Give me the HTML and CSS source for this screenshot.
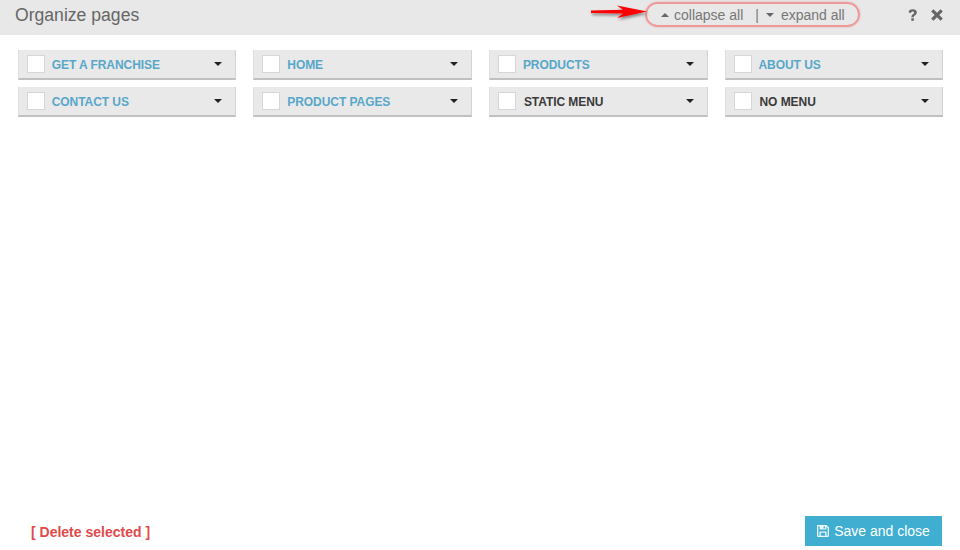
FILE: index.html
```html
<!DOCTYPE html>
<html lang="en">
<head>
<meta charset="utf-8">
<title>Organize pages</title>
<link rel="stylesheet" href="styles.css">
</head>
<body>
<div class="dialog">
  <header class="head">
    <h1 class="title">Organize pages</h1>
    <div class="toggles">
      <svg class="arrow" width="60" height="20" viewBox="0 0 60 20">
        <defs><filter id="s" x="-20%" y="-50%" width="140%" height="220%"><feDropShadow dx="1" dy="2" stdDeviation="1.5" flood-color="#000" flood-opacity=".45"/></filter></defs>
        <path d="M1 5.600 L33 4.800 L27 0.500 L57 6.500 L27 13 L33 8.500 L1 8 Z" fill="#f00" filter="url(#s)"/>
      </svg>
      <span class="toggle"><i class="tri up"></i>collapse all</span>
      <span class="sep">|</span>
      <span class="toggle"><i class="tri down"></i>expand all</span>
    </div>
    <div class="tools">
      <svg width="12" height="14" viewBox="0 0 12 14"><path d="M1.600 4.600C1.700 2.400 3.200 1.300 5.600 1.300c2.500 0 4.200 1.200 4.200 3.200 0 1.500-.9 2.200-1.900 2.900-.9.600-1.200.9-1.200 1.800H4.400c0-1.600.5-2.300 1.500-3 .8-.5 1.200-.8 1.200-1.500 0-.7-.6-1.100-1.500-1.100-1 0-1.500.5-1.600 1.500ZM4.300 10.300h2.600v2.500H4.300Z" fill="#666"/></svg>
      <svg width="14" height="14" viewBox="0 0 14 14"><path d="M2.300 2.300 11.700 11.700M11.700 2.300 2.300 11.700" stroke="#666" stroke-width="3.200"/></svg>
    </div>
  </header>
  <main class="grid">
    <div class="card"><span class="check"></span><span class="label link">GET A FRANCHISE</span><i class="caret"></i></div>
    <div class="card"><span class="check"></span><span class="label link">HOME</span><i class="caret"></i></div>
    <div class="card"><span class="check"></span><span class="label link">PRODUCTS</span><i class="caret"></i></div>
    <div class="card"><span class="check"></span><span class="label link">ABOUT US</span><i class="caret"></i></div>
    <div class="card"><span class="check"></span><span class="label link">CONTACT US</span><i class="caret"></i></div>
    <div class="card"><span class="check"></span><span class="label link">PRODUCT PAGES</span><i class="caret"></i></div>
    <div class="card"><span class="check"></span><span class="label">STATIC MENU</span><i class="caret"></i></div>
    <div class="card"><span class="check"></span><span class="label">NO MENU</span><i class="caret"></i></div>
  </main>
  <footer class="foot">
    <span class="delete">[ Delete selected ]</span>
    <button class="save" type="button">
      <svg width="14" height="14" viewBox="0 0 14 14"><path fill-rule="evenodd" d="M1.500 1H10.500L13 3.500V11.500A1.500 1.500 0 0 1 11.500 13H2.500A1.500 1.500 0 0 1 1 11.500V1.500ZM2.300 2.300V11.700H3.500V7.500H10.500V11.700H11.700V4L10.300 2.700V5.500H3.700V2.300ZM4.800 8.800V11.700H9.200V8.800ZM7.500 2.500V4.400H9V2.500Z" fill="#fff" fill-opacity=".9"/></svg>
      Save and close
    </button>
  </footer>
</div>
</body>
</html>
```

FILE: styles.css
```css
* { box-sizing: border-box; }
html, body { margin: 0; height: 100%; background: #fff; }
body { font-family: "Liberation Sans", Arial, sans-serif; overflow: hidden; }

.dialog { height: 550px; display: flex; flex-direction: column; }

.head {
  height: 35px;
  flex: none;
  background: #e8e8e8;
  display: flex;
  align-items: center;
  padding: 0 16px 0 15px;
  color: #666;
  position: relative;
  z-index: 1;
}
.title {
  margin: 0;
  font-size: 17.600px;
  font-weight: 400;
  color: #666;
  flex: 1;
  position: relative;
  top: -2px;
}

.toggles {
  position: relative;
  top: -3px;
  width: 215px;
  height: 25px;
  margin-right: 47px;
  border: 2px solid #ee9a9a;
  border-radius: 13px;
  box-shadow: 0 0 2px rgba(240, 120, 120, .6);
  display: flex;
  align-items: center;
  padding-left: 14px;
  font-size: 14px;
  color: #777;
}
.toggle { display: inline-flex; align-items: center; }
.sep { margin: 0 7px 0 12px; color: #777; }
.toggle:last-child .tri { margin-right: 7px; }
.arrow { position: absolute; left: -57px; top: 1px; }

.tri { width: 0; height: 0; margin-right: 5px; border-left: 4px solid transparent; border-right: 4px solid transparent; }
.tri.up { border-bottom: 4px solid #666; }
.tri.down { border-top: 4px solid #666; }

.tools { display: flex; align-items: center; gap: 11px; position: relative; top: -3px; }
.tools svg { display: block; }

.grid {
  flex: 1;
  display: grid;
  grid-template-columns: repeat(4, 1fr);
  grid-auto-rows: 30px;
  align-content: start;
  gap: 7px 17px;
  padding: 50px 16.900px 0 17.700px;
  margin-top: -35px;
}

.card {
  display: flex;
  align-items: center;
  background: #e9e9e9;
  border-right: 1px solid #d4d4d4;
  border-left: 1px solid #dedede;
  border-bottom: 2px solid #c0c0c0;
  padding: 0 13px 0 8px;
}
.check {
  width: 18px;
  height: 18px;
  background: #fff;
  border: 1px solid #d6d6d6;
  margin-right: 7px;
  flex: none;
}
.label {
  flex: 1;
  font-size: 12px;
  letter-spacing: -.06px;
  font-weight: 700;
  color: #3a3a3a;
  padding-left: 1px;
  position: relative;
  top: 1px;
}
.label.link { color: #57a7c9; padding-left: 0; }
.caret {
  width: 0;
  height: 0;
  border-left: 4.500px solid transparent;
  border-right: 4.500px solid transparent;
  border-top: 4.500px solid #222;
}

.foot {
  flex: none;
  height: 34px;
  display: flex;
  align-items: flex-start;
  justify-content: space-between;
  padding: 0 18px 0 31px;
}
.delete {
  font-size: 14px;
  font-weight: 700;
  color: #e04a4a;
  margin-top: 8px;
}
.save {
  width: 137px;
  height: 30px;
  border: 0;
  background: #3faed1;
  color: #fff;
  font: 400 14px "Liberation Sans", Arial, sans-serif;
  display: flex;
  align-items: center;
  justify-content: center;
  gap: 4px;
  padding: 0 1px 0 0;
}
```
